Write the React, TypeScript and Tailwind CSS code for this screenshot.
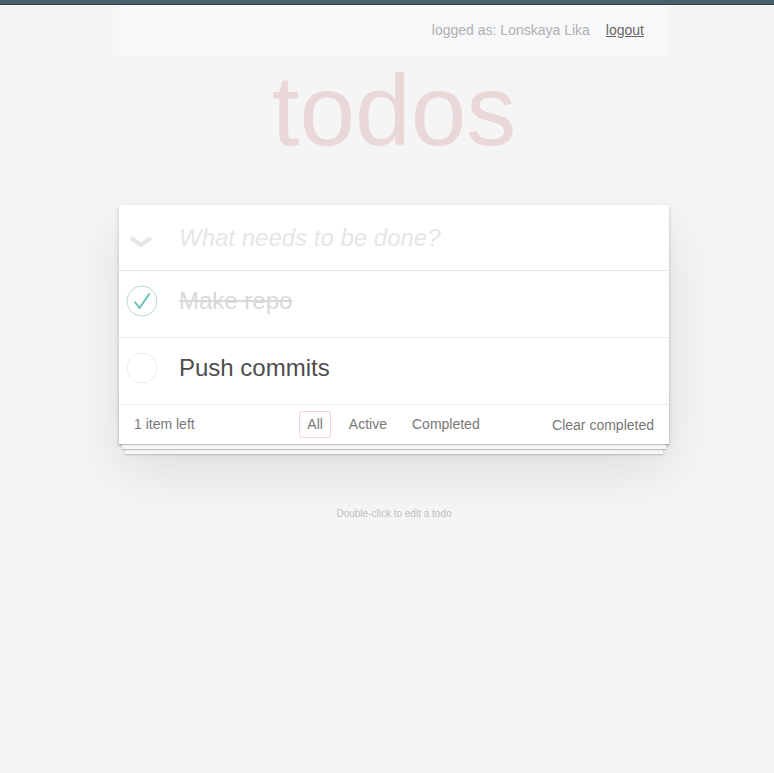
import React from "react";

function Chevron() {
  return (
    <svg width="24" height="14" viewBox="0 0 24 14" className="block">
      <path d="M2 3 L12 10 L22 3" fill="none" stroke="#e6e6e6" strokeWidth="4" strokeLinejoin="miter" />
    </svg>
  );
}

function Circle({ done }: { done: boolean }) {
  return (
    <svg width="32" height="32" viewBox="0 0 32 32" className="block">
      <circle cx="16" cy="16" r="15" fill="none" stroke={done ? "#bddad5" : "#ededed"} strokeWidth="1" />
      {done && <path d="M8.5 16.5 L13.5 23 L23.5 8.5" fill="none" stroke="#5dc2af" strokeWidth="1.8" />}
    </svg>
  );
}

export default function App() {
  return (
    <div className="min-h-[773px] bg-[#f5f5f5] font-['Liberation_Sans',Arial,sans-serif]">
      <div className="h-[5px] border-b border-[#2f3e47] bg-[#4b606d]"></div>

      <div className="ml-[119px] w-[550px]">
        <div className="flex h-[51px] items-center justify-end gap-4 bg-[#f7f8f9] pr-[25px] text-[14px]">
          <span className="text-[#b0b0b0]">logged as: Lonskaya Lika</span>
          <span className="text-[#666] underline">logout</span>
        </div>

        <h1 className="mb-[45px] mt-[4px] text-center text-[100px] font-thin leading-[100px] text-[rgba(175,47,47,0.15)]">
          todos
        </h1>

        <section className="relative bg-white shadow-[0_2px_4px_0_rgba(0,0,0,0.2),0_25px_50px_0_rgba(0,0,0,0.1)]">
          <div className="flex h-[66px] items-center border-b border-[#e6e6e6]">
            <div className="w-[60px] pl-[10px] pt-[8px]">
              <Chevron />
            </div>
            <span className="text-[24px] italic text-[#e6e6e6]">What needs to be done?</span>
          </div>

          <ul>
            <li className="flex h-[67px] items-center border-b border-[#ededed] pb-[6px]">
              <div className="w-[60px] pl-[7px]">
                <Circle done />
              </div>
              <span className="text-[24px] text-[#d9d9d9] line-through">Make repo</span>
            </li>
            <li className="flex h-[67px] items-center border-b border-[#ededed] pb-[6px]">
              <div className="w-[60px] pl-[7px]">
                <Circle done={false} />
              </div>
              <span className="text-[24px] text-[#4d4d4d]">Push commits</span>
            </li>
          </ul>

          <footer className="relative grid h-[39px] grid-cols-[1fr_auto_1fr] items-center px-[15px] text-[14px] text-[#777]">
            <div className="absolute inset-x-0 bottom-0 h-[50px] shadow-[0_1px_1px_rgba(0,0,0,0.2),0_8px_0_-3px_#f6f6f6,0_9px_1px_-3px_rgba(0,0,0,0.2),0_16px_0_-6px_#f6f6f6,0_17px_2px_-6px_rgba(0,0,0,0.2)]"></div>
            <span className="relative">1 item left</span>
            <div className="relative mr-[9px] flex items-center gap-[18px]">
              <span className="rounded-[3px] border border-[rgba(175,47,47,0.2)] px-[7px] py-[2px]">All</span>
              <span>Active</span>
              <span className="ml-[7px]">Completed</span>
            </div>
            <span className="relative pt-[2px] text-right">Clear completed</span>
          </footer>
        </section>

        <p className="mt-[62px] text-center text-[10px] text-[#bfbfbf]">Double-click to edit a todo</p>
      </div>
    </div>
  );
}
